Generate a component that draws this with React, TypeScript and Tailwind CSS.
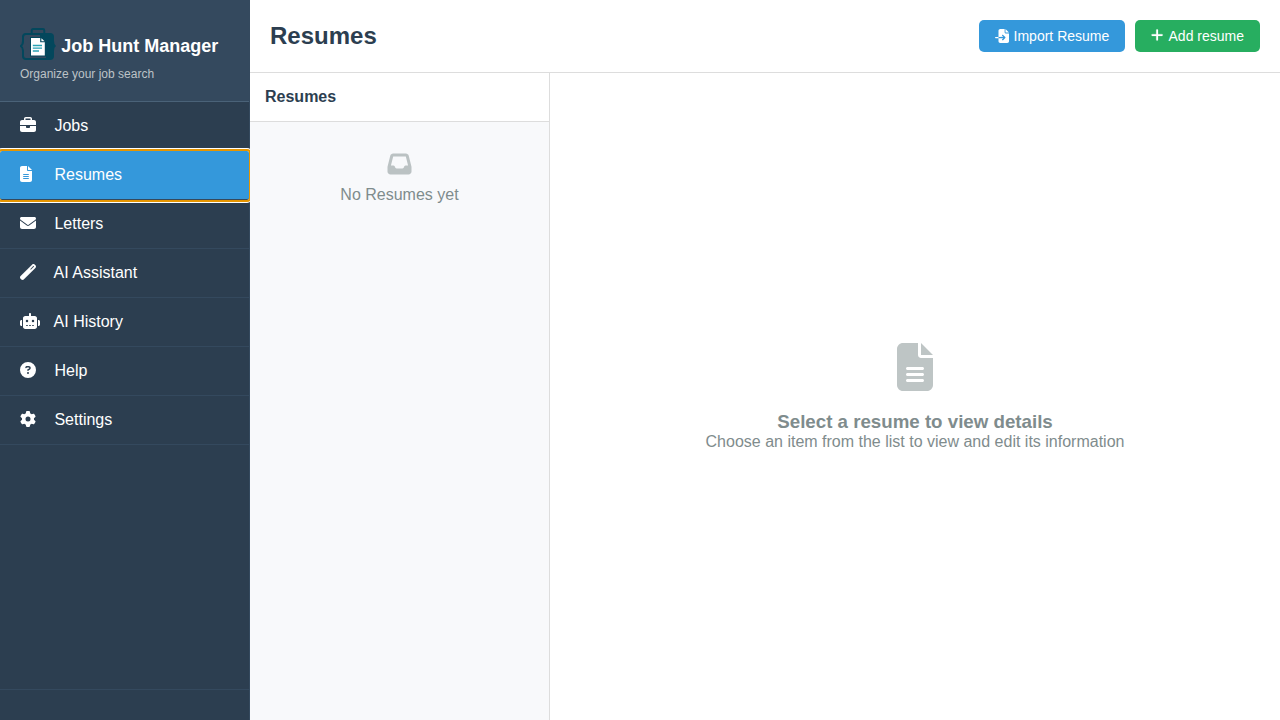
import type { ComponentType } from "react";
import {
  FaBriefcase,
  FaCircleQuestion,
  FaEnvelope,
  FaFileImport,
  FaFileLines,
  FaGear,
  FaInbox,
  FaPlus,
  FaRobot,
  FaWandMagic,
} from "react-icons/fa6";

type NavItem = {
  label: string;
  icon: ComponentType<{ className?: string }>;
  iconSize: string;
  active?: boolean;
};

const navItems: NavItem[] = [
  { label: "Jobs", icon: FaBriefcase, iconSize: "h-4 w-4" },
  { label: "Resumes", icon: FaFileLines, iconSize: "h-4 w-3", active: true },
  { label: "Letters", icon: FaEnvelope, iconSize: "h-4 w-4" },
  { label: "AI Assistant", icon: FaWandMagic, iconSize: "h-4 w-4 stroke-[6px]" },
  { label: "AI History", icon: FaRobot, iconSize: "h-4 w-5" },
  { label: "Help", icon: FaCircleQuestion, iconSize: "h-4 w-4" },
  { label: "Settings", icon: FaGear, iconSize: "h-4 w-4" },
];

function Logo() {
  return (
    <svg viewBox="0 0 36 32" className="h-8 w-9 shrink-0" fill="none">
      <path d="M11.7 5V2.4Q11.7 1 13.1 1H22.9Q24.3 1 24.3 2.4V5" stroke="#03475c" strokeWidth="1.9" />
      <path
        d="M20 6H6Q3 6 3 9V13Q3 16.6 .8 18Q3 19.4 3 22.5V28Q3 31 6 31H26"
        stroke="#03475c"
        strokeWidth="2"
      />
      <path
        d="M20 5H30Q34 5 34 9V13Q34 16.8 36 18Q34 19.2 34 23V28Q34 32 30 32H26V14L20 8.5Z"
        fill="#03475c"
      />
      <path d="M10 9H21L26 14V28.5H10Z" fill="#03475c" />
      <path d="M11 10H20.2V14.2H24.8V27.6H11Z" fill="#fff" />
      <path d="M21.4 10.3L24.6 13.3H21.4Z" fill="#fff" />
      <path d="M12.8 17.5H22M12.8 20.2H22M12.8 23H19" stroke="#2aa3b5" strokeWidth="1.3" />
    </svg>
  );
}

function NavRow({ item }: { item: NavItem }) {
  const Icon = item.icon;
  return (
    <li>
      <button
        className={
          item.active
            ? "relative flex h-[49px] w-full items-center rounded-[2px] border-b border-[#34495e] bg-[#3498db] px-5 pb-px text-left shadow-[0_0_0_3px_#fff] outline-2 outline-[#e69500]"
            : "flex h-[49px] w-full items-center border-b border-[#34495e] px-5 pb-px text-left"
        }
      >
        <span className="mr-2.5 mb-[2px] flex w-5 shrink-0">
          <Icon className={item.iconSize} />
        </span>
        <span className="leading-[18px] whitespace-pre">{` ${item.label}`}</span>
      </button>
    </li>
  );
}

export default function App() {
  return (
    <div className="flex h-screen overflow-hidden bg-white font-['Liberation_Sans',Arial,sans-serif] text-base text-[#2c3e50]">
      <aside className="flex w-[250px] shrink-0 flex-col border-r border-[#34495e] bg-[#2c3e50] text-white">
        <div className="h-[102px] shrink-0 border-b border-[#4a6278] bg-[#34495e] px-5 pt-7">
          <div className="flex h-8 items-center gap-[5.3px]">
            <Logo />
            <h1 className="pt-1 text-[18px] leading-5 font-bold whitespace-nowrap">Job Hunt Manager</h1>
          </div>
          <p className="mt-[7px] text-[12px] leading-[14px] text-[#bdc3c7]">Organize your job search</p>
        </div>
        <nav className="grow">
          <ul>
            {navItems.map((item) => (
              <NavRow key={item.label} item={item} />
            ))}
          </ul>
        </nav>
        <div className="h-[31px] shrink-0 border-t border-[#34495e]" />
      </aside>

      <main className="relative z-10 flex min-w-0 grow flex-col bg-white">
        <header className="flex h-[73px] shrink-0 items-center justify-between border-b border-[#ddd] px-5">
          <h2 className="text-2xl leading-7 font-bold">Resumes</h2>
          <div className="flex gap-2.5 text-sm leading-4 text-white">
            <button className="flex h-8 items-center gap-[5px] rounded-[5px] bg-[#3498db] px-4">
              <FaFileImport className="h-3.5 w-3.5" />
              Import Resume
            </button>
            <button className="flex h-8 items-center rounded-[5px] bg-[#27ae60] px-4">
              <FaPlus className="mr-[5px] mb-0.5 h-3.5 w-[12.25px] stroke-[8px]" />
              Add resume
            </button>
          </div>
        </header>

        <div className="flex min-h-0 grow">
          <section className="w-[300px] shrink-0 border-r border-[#ddd] bg-[#f8f9fb]">
            <div className="flex h-[49px] items-center border-b border-[#ddd] bg-white px-[15px]">
              <h3 className="leading-[18px] font-bold">Resumes</h3>
            </div>
            <div className="flex flex-col items-center pt-[30px] text-[#7f8c8d]">
              <FaInbox className="h-6 w-[25px] opacity-50" />
              <p className="mt-2.5 leading-[18px]">No Resumes yet</p>
            </div>
          </section>

          <section className="flex grow flex-col items-center justify-center pt-0.5 text-[#7f8c8d]">
            <FaFileLines className="mb-5 h-12 w-9 opacity-50" />
            <h3 className="text-[18.72px] leading-[21px] font-bold">Select a resume to view details</h3>
            <p className="leading-5">Choose an item from the list to view and edit its information</p>
          </section>
        </div>
      </main>
    </div>
  );
}
